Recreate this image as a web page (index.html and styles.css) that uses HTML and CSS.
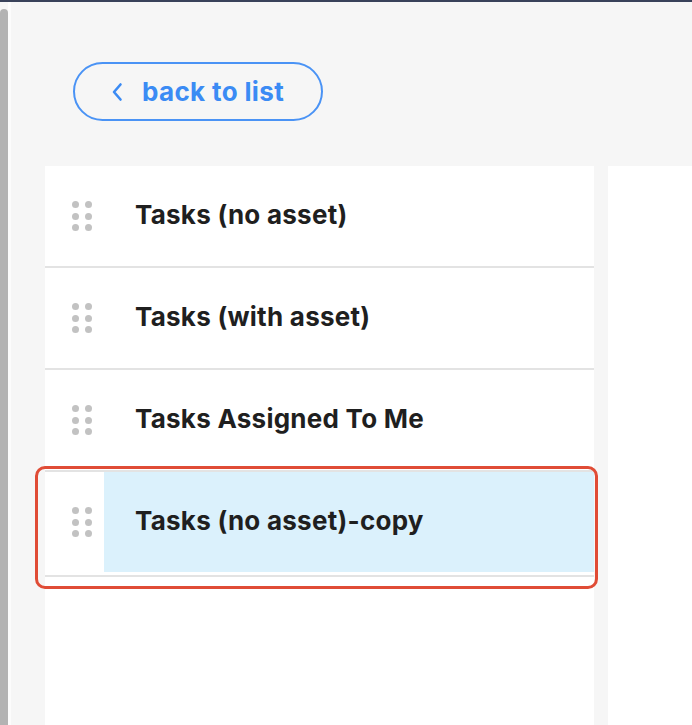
FILE: index.html
```html
<!DOCTYPE html>
<html lang="en">
<head>
<meta charset="utf-8">
<title>Views</title>
<link rel="stylesheet" href="styles.css">
</head>
<body>
<div class="topbar"></div>
<div class="app">
  <div class="scrollbar"></div>
  <div class="edge"></div>
  <main class="content">
    <div class="header">
      <button class="back-btn" type="button">
        <svg class="chev" width="12" height="22" viewBox="0 0 12 22"><path d="M9.5 3.5 L3 11 L9.5 18.5" fill="none" stroke="currentColor" stroke-width="2.6" stroke-linecap="round" stroke-linejoin="round"/></svg>
        <span>back to list</span>
      </button>
    </div>
    <div class="panels">
      <div class="list">
        <div class="row">
          <div class="handle"><i></i><i></i><i></i><i></i><i></i><i></i></div>
          <div class="label">Tasks (no asset)</div>
        </div>
        <div class="row">
          <div class="handle"><i></i><i></i><i></i><i></i><i></i><i></i></div>
          <div class="label">Tasks (with asset)</div>
        </div>
        <div class="row">
          <div class="handle"><i></i><i></i><i></i><i></i><i></i><i></i></div>
          <div class="label">Tasks Assigned To Me</div>
        </div>
        <div class="row row-active">
          <div class="handle"><i></i><i></i><i></i><i></i><i></i><i></i></div>
          <div class="label">Tasks (no asset)-copy</div>
          <div class="focus-ring"></div>
        </div>
      </div>
      <div class="detail"></div>
    </div>
  </main>
</div>
</body>
</html>
```

FILE: styles.css
```css
* { box-sizing: border-box; }
html, body {
  margin: 0;
  padding: 0;
  height: 100%;
  overflow: hidden;
  background: #f6f6f6;
  font-family: Inter, "Noto Sans", sans-serif;
}
.topbar {
  height: 2px;
  background: #39425a;
}
.app {
  display: flex;
  height: 723px;
}
.scrollbar {
  width: 8px;
  margin-top: 7px;
  background: #b3b3b3;
  border-radius: 4px 4px 0 0;
}
.edge {
  width: 3px;
  background: #fcfcfc;
}
.content {
  flex: 1;
  display: flex;
  flex-direction: column;
  padding-left: 34px;
  min-width: 0;
}
.header {
  height: 164px;
  padding-top: 60px;
  padding-left: 28px;
}
.back-btn {
  width: 250px;
  height: 59px;
  border: 2px solid #4a93f5;
  border-radius: 30px;
  background: transparent;
  color: #3b8bf4;
  font-family: Inter, "Noto Sans", sans-serif;
  font-weight: 700;
  font-size: 26px;
  letter-spacing: 0.35px;
  display: flex;
  align-items: center;
  padding: 0 0 0 36px;
  gap: 19px;
}
.chev { display: block; }
.panels {
  flex: 1;
  display: flex;
  gap: 14px;
}
.list {
  width: 549px;
  background: #fff;
  position: relative;
}
.row {
  height: 102px;
  display: flex;
  align-items: center;
  border-bottom: 2px solid #e3e3e3;
  position: relative;
}
.handle {
  width: 59px;
  align-self: stretch;
  padding-left: 27px;
  display: grid;
  grid-template-columns: 7px 7px;
  grid-auto-rows: 7px;
  column-gap: 6px;
  row-gap: 4.5px;
  align-content: center;
}
.handle i {
  display: block;
  width: 7px;
  height: 7px;
  border-radius: 50%;
  background: #c2c2c2;
}
.label {
  flex: 1;
  padding-left: 31px;
  padding-bottom: 3px;
  font-weight: 700;
  font-size: 26px;
  letter-spacing: 0.25px;
  color: #1f1f1f;
  align-self: stretch;
  display: flex;
  align-items: center;
}
.row-active {
  height: 105px;
  align-items: flex-start;
}
.row-active .handle,
.row-active .label {
  height: 100px;
}
.row-active .label {
  background: #dbf1fc;
}
.focus-ring {
  position: absolute;
  left: -10px;
  top: -6px;
  right: -4px;
  bottom: -14px;
  border: 3px solid #e04c36;
  border-radius: 10px;
  pointer-events: none;
}
.detail {
  flex: 1;
  background: #fff;
}
```
